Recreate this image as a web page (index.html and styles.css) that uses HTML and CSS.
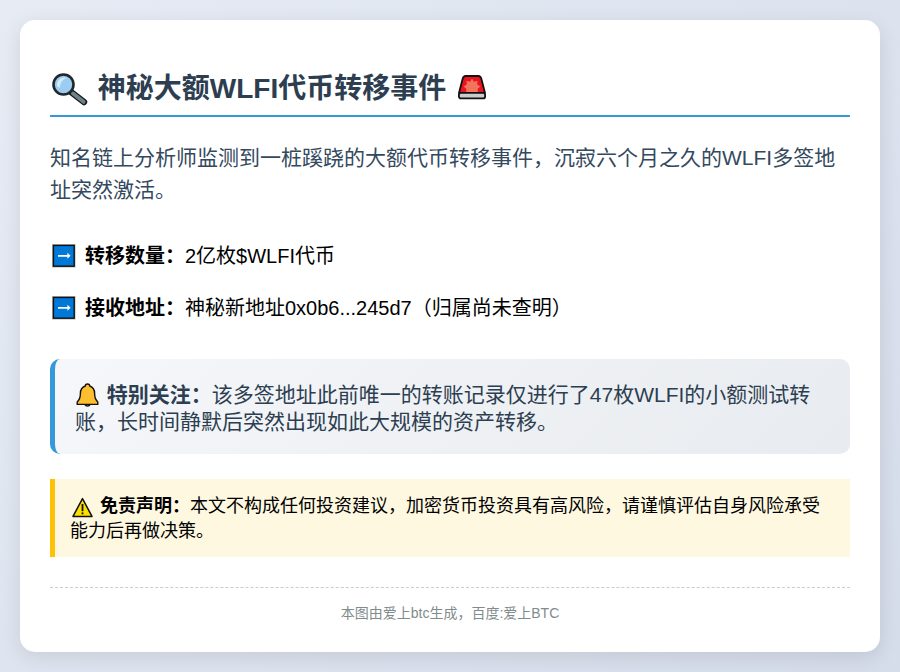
FILE: index.html
```html
<!DOCTYPE html>
<html lang="zh-CN">
<head>
<meta charset="utf-8">
<title>神秘大额WLFI代币转移事件</title>
<link rel="stylesheet" href="styles.css">
</head>
<body>
<main class="card">
  <h1 class="title"><svg class="icon icon-search" viewBox="0 0 40 39" aria-hidden="true">
      <path d="M21 23 L34 33" stroke="#15191b" stroke-width="6.4" stroke-linecap="round" fill="none"/>
      <path d="M23 24.5 L33.6 32.8" stroke="#6f8188" stroke-width="4" stroke-linecap="round" fill="none"/>
      <circle cx="13.5" cy="15.5" r="10" fill="#9ccdf0" stroke="#20282b" stroke-width="2.6"/>
      <path d="M7 17 A7.5 7.5 0 0 1 14 8.5 L17 9 A9 9 0 0 0 10 19 Z" fill="#d3ecfb"/>
    </svg> 神秘大额WLFI代币转移事件 <svg class="icon icon-siren" viewBox="0 0 36 39" aria-hidden="true">
      <path d="M11.5 7 H24.5 Q26.5 7 27.4 10 L31 24 H5 L8.6 10 Q9.5 7 11.5 7 Z" fill="#e8141f" stroke="#111" stroke-width="1.8" stroke-linejoin="round"/>
      <path d="M18 9.5 L19.9 12.8 L23.4 11.8 L23.2 15.4 L26.4 17.6 L23.6 20 L24 24 H12 L12.4 20 L9.6 17.6 L12.8 15.4 L12.6 11.8 L16.1 12.8 Z" fill="#f4735c"/>
      <rect x="4.9" y="23.8" width="26.2" height="5.6" rx="2" fill="#cbcbcb" stroke="#111" stroke-width="1.8"/>
    </svg></h1>
  <p class="intro">知名链上分析师监测到一桩蹊跷的大额代币转移事件，沉寂六个月之久的WLFI多签地址突然激活。</p>
  <div class="facts">
    <p class="fact"><svg class="icon icon-arrow" viewBox="0 0 29.4 28" aria-hidden="true">
      <rect x="2" y="2" width="23.6" height="23.6" fill="#bdbdbd"/>
      <rect x="3.4" y="3.4" width="20.8" height="20.8" fill="#0078d7" stroke="#111" stroke-width="1.4"/>
      <path d="M8 13 H17.4 V10.8 L20.6 13.8 L17.4 16.8 V14.8 H8 Z" fill="#fff"/>
    </svg> <strong>转移数量：</strong>2亿枚$WLFI代币</p>
    <p class="fact"><svg class="icon icon-arrow" viewBox="0 0 29.4 28" aria-hidden="true">
      <rect x="2" y="2" width="23.6" height="23.6" fill="#bdbdbd"/>
      <rect x="3.4" y="3.4" width="20.8" height="20.8" fill="#0078d7" stroke="#111" stroke-width="1.4"/>
      <path d="M8 13 H17.4 V10.8 L20.6 13.8 L17.4 16.8 V14.8 H8 Z" fill="#fff"/>
    </svg> <strong>接收地址：</strong>神秘新地址0x0b6...245d7（归属尚未查明）</p>
  </div>
  <div class="note"><svg class="icon icon-bell" viewBox="0 0 26 27.3" aria-hidden="true">
      <path d="M9.8 23.4 A3 3 0 0 0 15.2 23.4 Z" fill="#d98a10" stroke="#111" stroke-width="1.3"/>
      <path d="M12.5 3 C13.8 3 14.7 3.9 14.7 5 C18 6 19.6 9 19.6 12.6 C19.6 16.6 20.6 19 22.8 21 V23.4 H2.2 V21 C4.4 19 5.4 16.6 5.4 12.6 C5.4 9 7 6 10.3 5 C10.3 3.9 11.2 3 12.5 3 Z" fill="#fdbf2f" stroke="#111" stroke-width="1.4" stroke-linejoin="round"/>
    </svg> <strong>特别关注：</strong>该多签地址此前唯一的转账记录仅进行了47枚WLFI的小额测试转账，长时间静默后突然出现如此大规模的资产转移。</div>
  <div class="warning"><svg class="icon icon-warn" viewBox="0 0 25 25" aria-hidden="true">
      <path d="M12.5 4.6 L22 22.4 H3 Z" fill="#fce100" stroke="#111" stroke-width="1.5" stroke-linejoin="round"/>
      <rect x="11.6" y="10" width="1.8" height="7.2" fill="#111"/>
      <rect x="11.6" y="18.4" width="1.8" height="1.9" fill="#111"/>
    </svg> <strong>免责声明：</strong>本文不构成任何投资建议，加密货币投资具有高风险，请谨慎评估自身风险承受能力后再做决策。</div>
  <footer class="footer">本图由爱上btc生成，百度:爱上BTC</footer>
</main>
</body>
</html>
```
FILE: styles.css
```css
* { box-sizing: border-box; }
html, body { margin: 0; height: 100%; }
body {
  padding: 20px;
  background: linear-gradient(135deg, #e6ebf4 0%, #d5dcea 100%);
  font-family: "Liberation Sans", "Noto Sans CJK SC", sans-serif;
  color: #000;
}
.card {
  height: 632px;
  padding: 49px 30px 30px;
  background: #fff;
  border-radius: 15px;
  box-shadow: 0 5px 20px rgba(0, 0, 0, 0.1);
}
.icon { display: inline-block; vertical-align: top; }
.icon-search { width: 40px; height: 39px; }
.icon-siren { width: 36px; height: 39px; }
.icon-arrow { width: 29.4px; height: 28px; }
.icon-bell { width: 26px; height: 27.3px; }
.icon-warn { width: 25px; height: 25px; }
.title {
  margin: 0 0 25px;
  padding-bottom: 7px;
  border-bottom: 2px solid #3498db;
  font-size: 28px;
  line-height: 39px;
  font-weight: 700;
  color: #2c3e50;
}
.intro {
  margin: 0 0 37px;
  font-size: 21px;
  line-height: 31.5px;
  color: #34495e;
}
.fact {
  margin: 0 0 24px;
  font-size: 20px;
  line-height: 28px;
}
.note {
  margin-top: 37px;
  padding: 21.5px 20px 19px;
  font-size: 21px;
  line-height: 27.3px;
  color: #2c3e50;
  border-left: 5px solid #3498db;
  border-radius: 10px;
  background: linear-gradient(135deg, #f5f7fa 0%, #e8ebef 100%);
}
.warning {
  margin-top: 25px;
  padding: 15px 15px 13px;
  font-size: 18px;
  line-height: 25px;
  border-left: 5px solid #ffc107;
  background: #fff8e1;
}
.footer {
  margin-top: 30px;
  padding-top: 15px;
  border-top: 1px dashed #cccccc;
  font-size: 14px;
  line-height: 20px;
  text-align: center;
  color: #7f8c8d;
}
```
